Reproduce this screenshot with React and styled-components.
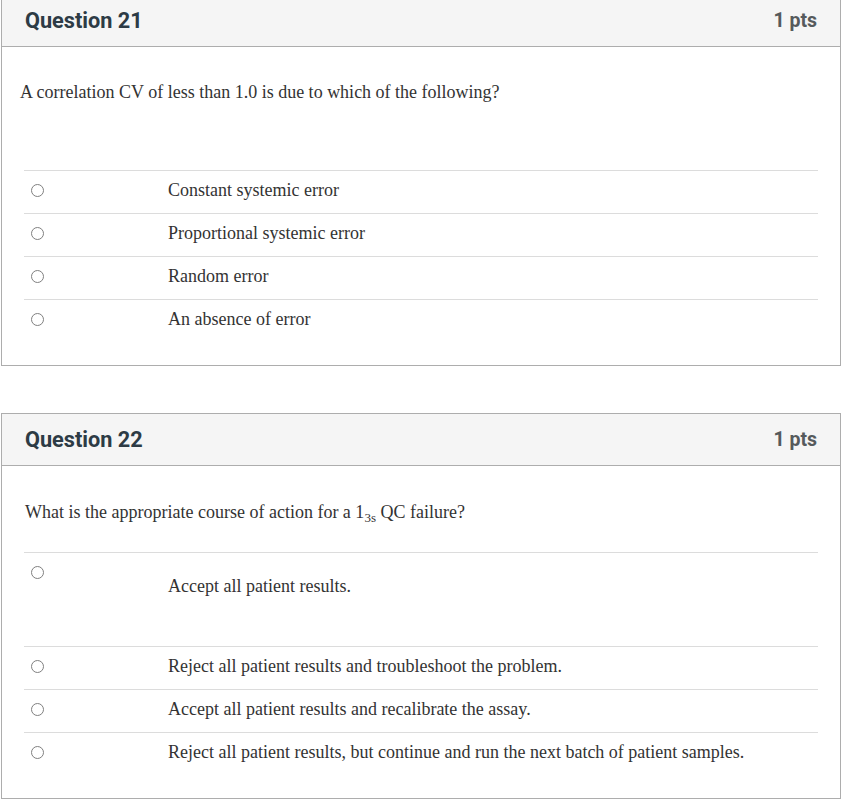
import React from "react";
import styled, { createGlobalStyle } from "styled-components";

const Global = createGlobalStyle`
  html, body { margin: 0; padding: 0; background: #fff; }
  body { font-family: "Liberation Serif", "Times New Roman", serif; color: #2d3b45; }
`;

const Page = styled.div`
  display: flex;
  flex-direction: column;
  gap: 47px;
  padding-left: 1px;
  margin-top: -6px;
  width: 840px;
`;

const Card = styled.section`
  border: 1px solid #adadad;
  background: #fff;
  padding-bottom: 23px;
`;

const Header = styled.header`
  height: 51px;
  display: flex;
  align-items: center;
  justify-content: space-between;
  padding: 0 23px 0 23px;
  background: #f5f5f5;
  border-bottom: 1px solid #adadad;
  font-family: Roboto, "Liberation Sans", Arial, sans-serif;
`;

const Title = styled.h2`
  margin: 0;
  font-size: 21.7px;
  font-weight: 700;
  color: #2d3b45;
`;

const Points = styled.span`
  font-size: 19.5px;
  font-weight: 700;
  color: #565a5c;
`;

const QuestionText = styled.p`
  margin: 0;
  font-size: 18px;
  line-height: 24px;
  color: #333;
  padding: ${(p) => p.$top}px 20px ${(p) => p.$bottom}px ${(p) => p.$left}px;
  sub { font-size: 13px; line-height: 0; vertical-align: -4px; }
`;

const Answers = styled.div`
  margin: 0 22px;
`;

const Row = styled.div`
  display: flex;
  align-items: ${(p) => (p.$tall ? "flex-start" : "center")};
  min-height: 38px;
  padding-bottom: ${(p) => (p.$tall ? 0 : 4)}px;
  border-top: 1px solid #dcdcdc;
`;

const RadioCell = styled.div`
  width: 144px;
  flex: none;
  padding-left: 7px;
  box-sizing: border-box;
  padding-top: ${(p) => (p.$tall ? 13 : 0)}px;
  display: flex;
`;

const Radio = styled.span`
  width: 13px;
  height: 13px;
  box-sizing: border-box;
  border-radius: 50%;
  border: 1px solid #808080;
  background: #fff;
  display: block;
`;

const AnswerText = styled.div`
  font-size: 18px;
  line-height: 24px;
  color: #333;
  padding: ${(p) => (p.$tall ? "21px 0 48px" : "0")};
`;

function Answer({ text, tall }) {
  return (
    <Row $tall={tall}>
      <RadioCell $tall={tall}>
        <Radio />
      </RadioCell>
      <AnswerText $tall={tall}>{text}</AnswerText>
    </Row>
  );
}

export default function App() {
  return (
    <>
      <Global />
      <Page>
        <Card>
          <Header>
            <Title>Question 21</Title>
            <Points>1 pts</Points>
          </Header>
          <QuestionText $top={33} $bottom={66} $left={18}>
            A correlation CV of less than 1.0 is due to which of the following?
          </QuestionText>
          <Answers>
            <Answer text="Constant systemic error" />
            <Answer text="Proportional systemic error" />
            <Answer text="Random error" />
            <Answer text="An absence of error" />
          </Answers>
        </Card>
        <Card>
          <Header>
            <Title>Question 22</Title>
            <Points>1 pts</Points>
          </Header>
          <QuestionText $top={34} $bottom={28} $left={23}>
            What is the appropriate course of action for a 1<sub>3s</sub> QC failure?
          </QuestionText>
          <Answers>
            <Answer tall text="Accept all patient results." />
            <Answer text="Reject all patient results and troubleshoot the problem." />
            <Answer text="Accept all patient results and recalibrate the assay." />
            <Answer text="Reject all patient results, but continue and run the next batch of patient samples." />
          </Answers>
        </Card>
      </Page>
    </>
  );
}
